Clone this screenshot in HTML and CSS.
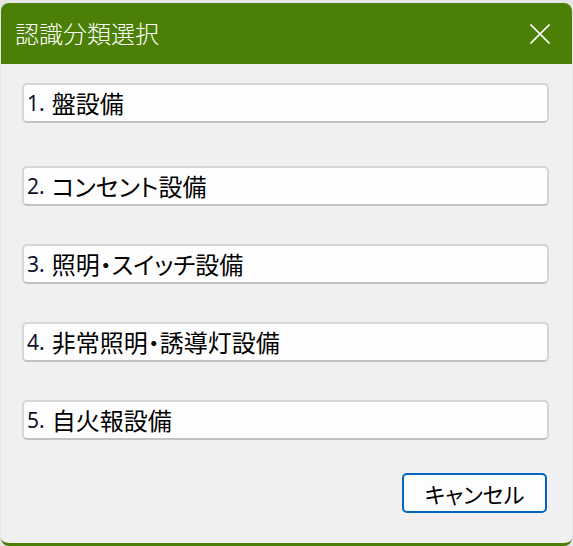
FILE: index.html
```html
<!DOCTYPE html>
<html lang="ja">
<head>
<meta charset="utf-8">
<title>認識分類選択</title>
<link rel="stylesheet" href="styles.css">
</head>
<body>
<div class="window">
  <header class="titlebar">
    <span class="title">認識分類選択</span>
    <button class="close" aria-label="閉じる">
      <svg width="20" height="20" viewBox="0 0 20 20"><path d="M0.5 0.5 L19.5 19.5 M19.5 0.5 L0.5 19.5" stroke="#fff" stroke-width="1.6" fill="none"/></svg>
    </button>
  </header>
  <main class="content">
    <div class="list">
      <button class="opt"><span class="num">1.</span>盤設備</button>
      <button class="opt"><span class="num">2.</span>コンセント設備</button>
      <button class="opt"><span class="num">3.</span>照明・スイッチ設備</button>
      <button class="opt"><span class="num">4.</span>非常照明・誘導灯設備</button>
      <button class="opt"><span class="num">5.</span>自火報設備</button>
    </div>
    <div class="footer">
      <button class="cancel">キャンセル</button>
    </div>
  </main>
</div>
</body>
</html>
```
FILE: styles.css
```css
html, body {
  margin: 0;
  padding: 0;
}
body {
  background: #e6e6e6;
  width: 573px;
  height: 546px;
  overflow: hidden;
  font-family: "Noto Sans CJK JP", "Noto Sans", sans-serif;
}
.window {
  margin: 3px 1px 0 1px;
  height: 543px;
  box-sizing: border-box;
  background: #f0f0f0;
  border-radius: 8px;
  border-bottom: 3px solid #4b7f06;
  display: flex;
  flex-direction: column;
  overflow: hidden;
}
.titlebar {
  height: 61px;
  flex: none;
  background: #4b7f06;
  display: flex;
  align-items: center;
  justify-content: space-between;
  padding: 0 22px 0 14px;
}
.title {
  color: #fff;
  font-size: 24px;
  font-weight: 300;
  line-height: 1;
  padding-bottom: 2px;
}
.close {
  border: 0;
  background: none;
  padding: 0;
  width: 20px;
  height: 20px;
  display: block;
}
.close svg { display: block; }
.content {
  padding: 19px 23px 0 21px;
  display: flex;
  flex-direction: column;
}
.list {
  display: flex;
  flex-direction: column;
  gap: 38px;
}
.opt {
  height: 40px;
  box-sizing: border-box;
  background: #fdfdfd;
  border: 2px solid #d6d6d6;
  border-bottom-color: #c2c2c2;
  border-radius: 5px;
  display: flex;
  align-items: center;
  padding: 0 0 0 3px;
  font-family: "Noto Sans CJK JP", sans-serif;
  font-feature-settings: "palt";
  font-size: 24px;
  color: #000;
  line-height: 1;
  text-align: left;
}
.opt:first-child {
  margin-bottom: 5px;
}
.num {
  font-family: "Noto Sans", sans-serif;
  font-size: 21px;
  color: #121230;
  margin-right: 7px;
}
.footer {
  display: flex;
  justify-content: flex-end;
  padding: 33px 2px 0 0;
}
.cancel {
  width: 145px;
  height: 40px;
  box-sizing: border-box;
  background: #fdfdfd;
  border: 2px solid #0067c0;
  border-radius: 5px;
  font-family: "Noto Sans CJK JP", sans-serif;
  font-feature-settings: "palt";
  font-size: 22px;
  color: #000;
  line-height: 1;
  padding: 0;
}
```
